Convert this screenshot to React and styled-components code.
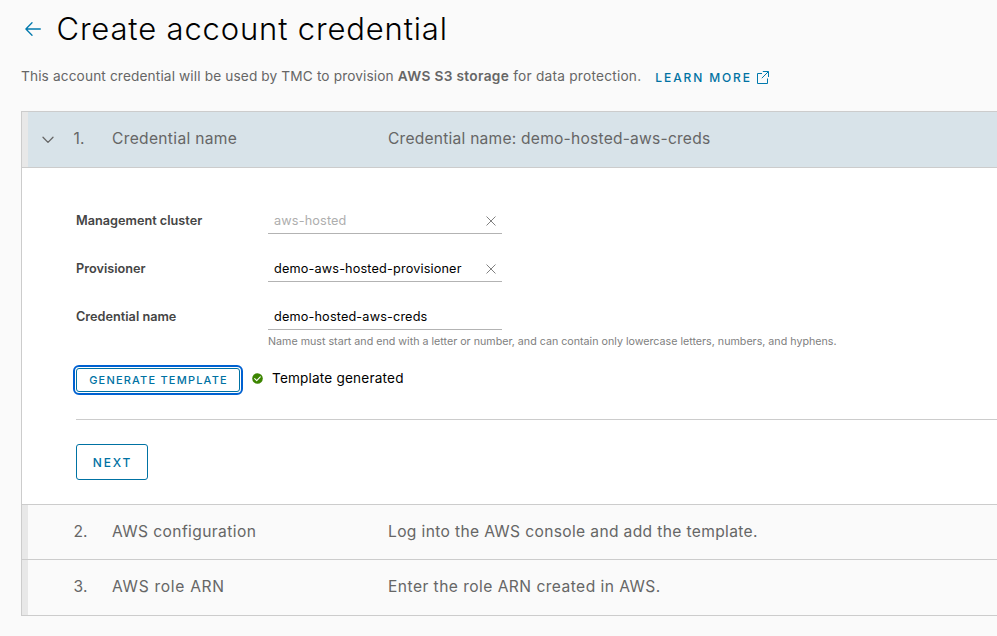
import React from "react";
import styled, { createGlobalStyle } from "styled-components";

const GlobalStyle = createGlobalStyle`
  * { box-sizing: border-box; }
  html, body { margin: 0; overflow: hidden; background: #fafafa; }
  body { font-family: "Inter", "Open Sans", sans-serif; font-size: 14px; color: #666; }
`;

const Page = styled.main`
  height: 636px;
  padding-left: 21px;
  overflow: hidden;
  white-space: nowrap;
`;

const TitleBar = styled.header`
  display: flex;
  align-items: center;
  gap: 15.5px;
  height: 58px;
  padding-left: 4px;
`;

const Title = styled.h1`
  margin: 0;
  font-size: 31px;
  font-weight: 350;
  line-height: 36px;
  letter-spacing: 0.84px;
  color: #000;
`;

const Intro = styled.div`
  display: flex;
  align-items: center;
  height: 53px;
  padding-bottom: 17px;
`;

const Description = styled.p`
  margin: 0;
  font-size: 13.7px;
  line-height: 24px;
  letter-spacing: 0.12px;
`;

const Strong = styled.strong`
  font-weight: 600;
  letter-spacing: 0.33px;
`;

const Tail = styled.span`
  letter-spacing: 0.22px;
`;

const LearnMore = styled.a`
  display: flex;
  align-items: center;
  gap: 4px;
  margin: 3px 0 0 14px;
  font-size: 12px;
  font-weight: 500;
  line-height: 24px;
  letter-spacing: 1.88px;
  color: #0072a3;
`;

const Stepper = styled.section`
  border: 1px solid #ccc;
  border-right: 0;
`;

const StepHeader = styled.div`
  display: grid;
  grid-template-columns: 45px 39px 276px 1fr;
  align-items: center;
  height: ${(p) => p.$height}px;
  padding-bottom: ${(p) => p.$lift || 0}px;
  border-left: 6px solid #e8e8e8;
  background: ${(p) => (p.$active ? "#d8e3e9" : "#fafafa")};
  font-size: 15.6px;
  line-height: 24px;
`;

const Chevron = styled.svg`
  justify-self: start;
  margin: 2px 0 0 14px;
`;

const StepNumber = styled.span`
  padding-left: 0.6px;
`;

const StepText = styled.span`
  letter-spacing: ${(p) => p.$track}px;
`;

const StepBody = styled.div`
  height: 338px;
  padding: 36px 0 0 54px;
  border: solid #ccc;
  border-width: 1px 0;
  background: #fff;
`;

const Field = styled.div`
  display: grid;
  grid-template-columns: 192px 234px;
  height: 48px;
`;

const Label = styled.label`
  padding-top: 5px;
  font-size: 12.7px;
  font-weight: 600;
  line-height: 24px;
  color: #454545;
`;

const Control = styled.div`
  display: flex;
  align-items: center;
  justify-content: space-between;
  height: 30px;
  padding: 5px 6px 0;
  border-bottom: 1px solid #b3b3b3;
  font-size: 12.7px;
  line-height: 24px;
  letter-spacing: 0.15px;
  color: ${(p) => (p.$disabled ? "#aeaeae" : "#000")};
`;

const Help = styled.p`
  margin: -18px 0 0 192px;
  font-size: 10.7px;
  line-height: 24px;
  color: #808080;
`;

const GenerateRow = styled.div`
  display: flex;
  align-items: center;
  margin-top: 14px;
`;

const Button = styled.button`
  height: ${(p) => (p.$small ? 24 : 36)}px;
  width: ${(p) => (p.$small ? 164 : 72)}px;
  padding: ${(p) => (p.$small ? "0 0 1px 1px" : "1px 0 0 1px")};
  border: 1px solid #0072a3;
  border-radius: 3px;
  outline: ${(p) => (p.$focused ? "2px solid #0061d1" : "none")};
  outline-offset: 1px;
  background: #fff;
  font-family: inherit;
  font-size: ${(p) => (p.$small ? 11 : 12)}px;
  font-weight: 500;
  letter-spacing: ${(p) => (p.$small ? 1.2 : 1.8)}px;
  color: #0072a3;
`;

const Status = styled.div`
  display: flex;
  align-items: center;
  gap: 9px;
  margin: -4px 0 0 12px;
  font-size: 13.6px;
  line-height: 24px;
  letter-spacing: 0.18px;
  color: #000;
`;

const StatusIcon = styled.svg`
  margin-top: 1px;
`;

const Actions = styled.div`
  margin-top: 27px;
  padding-top: 24px;
  border-top: 1px solid #ccc;
`;

const BackArrow = () => (
  <svg width="16" height="14" viewBox="0 0 16 14" fill="none" stroke="#0079ad" strokeWidth="1.3" strokeLinecap="round" strokeLinejoin="round">
    <path d="M15.3 7H1M7 .8L.9 7L7 13.2" />
  </svg>
);

const PopOut = () => (
  <svg width="13" height="13" viewBox="0 0 13 13" fill="none" stroke="#0079ad" strokeWidth="1">
    <path d="M6 2.5H1.5V12.5H11.5V7.5M6.8 .5H12.5V6M12.3 .7L5.8 7.2" />
  </svg>
);

const Clear = () => (
  <svg width="10" height="10" viewBox="0 0 10 10" fill="none" stroke="#808080" strokeWidth="1" strokeLinecap="round">
    <path d="M.8 .8L9.2 9.2M9.2 .8L.8 9.2" />
  </svg>
);

const Tick = () => (
  <StatusIcon width="11" height="11" viewBox="0 0 11 11" fill="none">
    <circle cx="5.5" cy="5.5" r="5.3" fill="#3c8500" />
    <path d="M2.7 5.7L4.7 7.6L8.3 3.8" stroke="#fff" strokeWidth="1.1" strokeLinecap="round" strokeLinejoin="round" />
  </StatusIcon>
);

const fields = [
  { label: "Management cluster", value: "aws-hosted", disabled: true, clearable: true },
  { label: "Provisioner", value: "demo-aws-hosted-provisioner", clearable: true },
  { label: "Credential name", value: "demo-hosted-aws-creds" },
];

function Step({ number, title, summary, titleTrack, summaryTrack, active, height, lift }) {
  return (
    <StepHeader $active={active} $height={height} $lift={lift}>
      {active ? (
        <Chevron width="12" height="8" viewBox="0 0 12 8" fill="none" stroke="#666" strokeWidth="1.3" strokeLinecap="round" strokeLinejoin="round">
          <path d="M1 1.2L6 6.4L11 1.2" />
        </Chevron>
      ) : (
        <span />
      )}
      <StepNumber>{number}.</StepNumber>
      <StepText $track={titleTrack}>{title}</StepText>
      <StepText $track={summaryTrack}>{summary}</StepText>
    </StepHeader>
  );
}

const Divider = styled.div`
  height: 1px;
  background: #ccc;
`;

export default function App() {
  return (
    <Page>
      <GlobalStyle />
      <TitleBar>
        <BackArrow />
        <Title>Create account credential</Title>
      </TitleBar>
      <Intro>
        <Description>
          This account credential will be used by TMC to provision <Strong>AWS S3 storage</Strong>
          <Tail> for data protection.</Tail>
        </Description>
        <LearnMore>
          LEARN MORE <PopOut />
        </LearnMore>
      </Intro>
      <Stepper>
        <Step number={1} title="Credential name" summary="Credential name: demo-hosted-aws-creds" titleTrack={0.32} summaryTrack={0.22} active height={55} lift={1} />
        <StepBody>
          {fields.map((f) => (
            <Field key={f.label}>
              <Label>{f.label}</Label>
              <Control $disabled={f.disabled}>
                {f.value}
                {f.clearable && <Clear />}
              </Control>
            </Field>
          ))}
          <Help>Name must start and end with a letter or number, and can contain only lowercase letters, numbers, and hyphens.</Help>
          <GenerateRow>
            <Button $small $focused>GENERATE TEMPLATE</Button>
            <Status>
              <Tick />
              Template generated
            </Status>
          </GenerateRow>
          <Actions>
            <Button>NEXT</Button>
          </Actions>
        </StepBody>
        <Step number={2} title="AWS configuration" summary="Log into the AWS console and add the template." titleTrack={0.4} summaryTrack={0.35} height={54} />
        <Divider />
        <Step number={3} title="AWS role ARN" summary="Enter the role ARN created in AWS." titleTrack={0.7} summaryTrack={0.45} height={55} lift={1} />
      </Stepper>
    </Page>
  );
}
